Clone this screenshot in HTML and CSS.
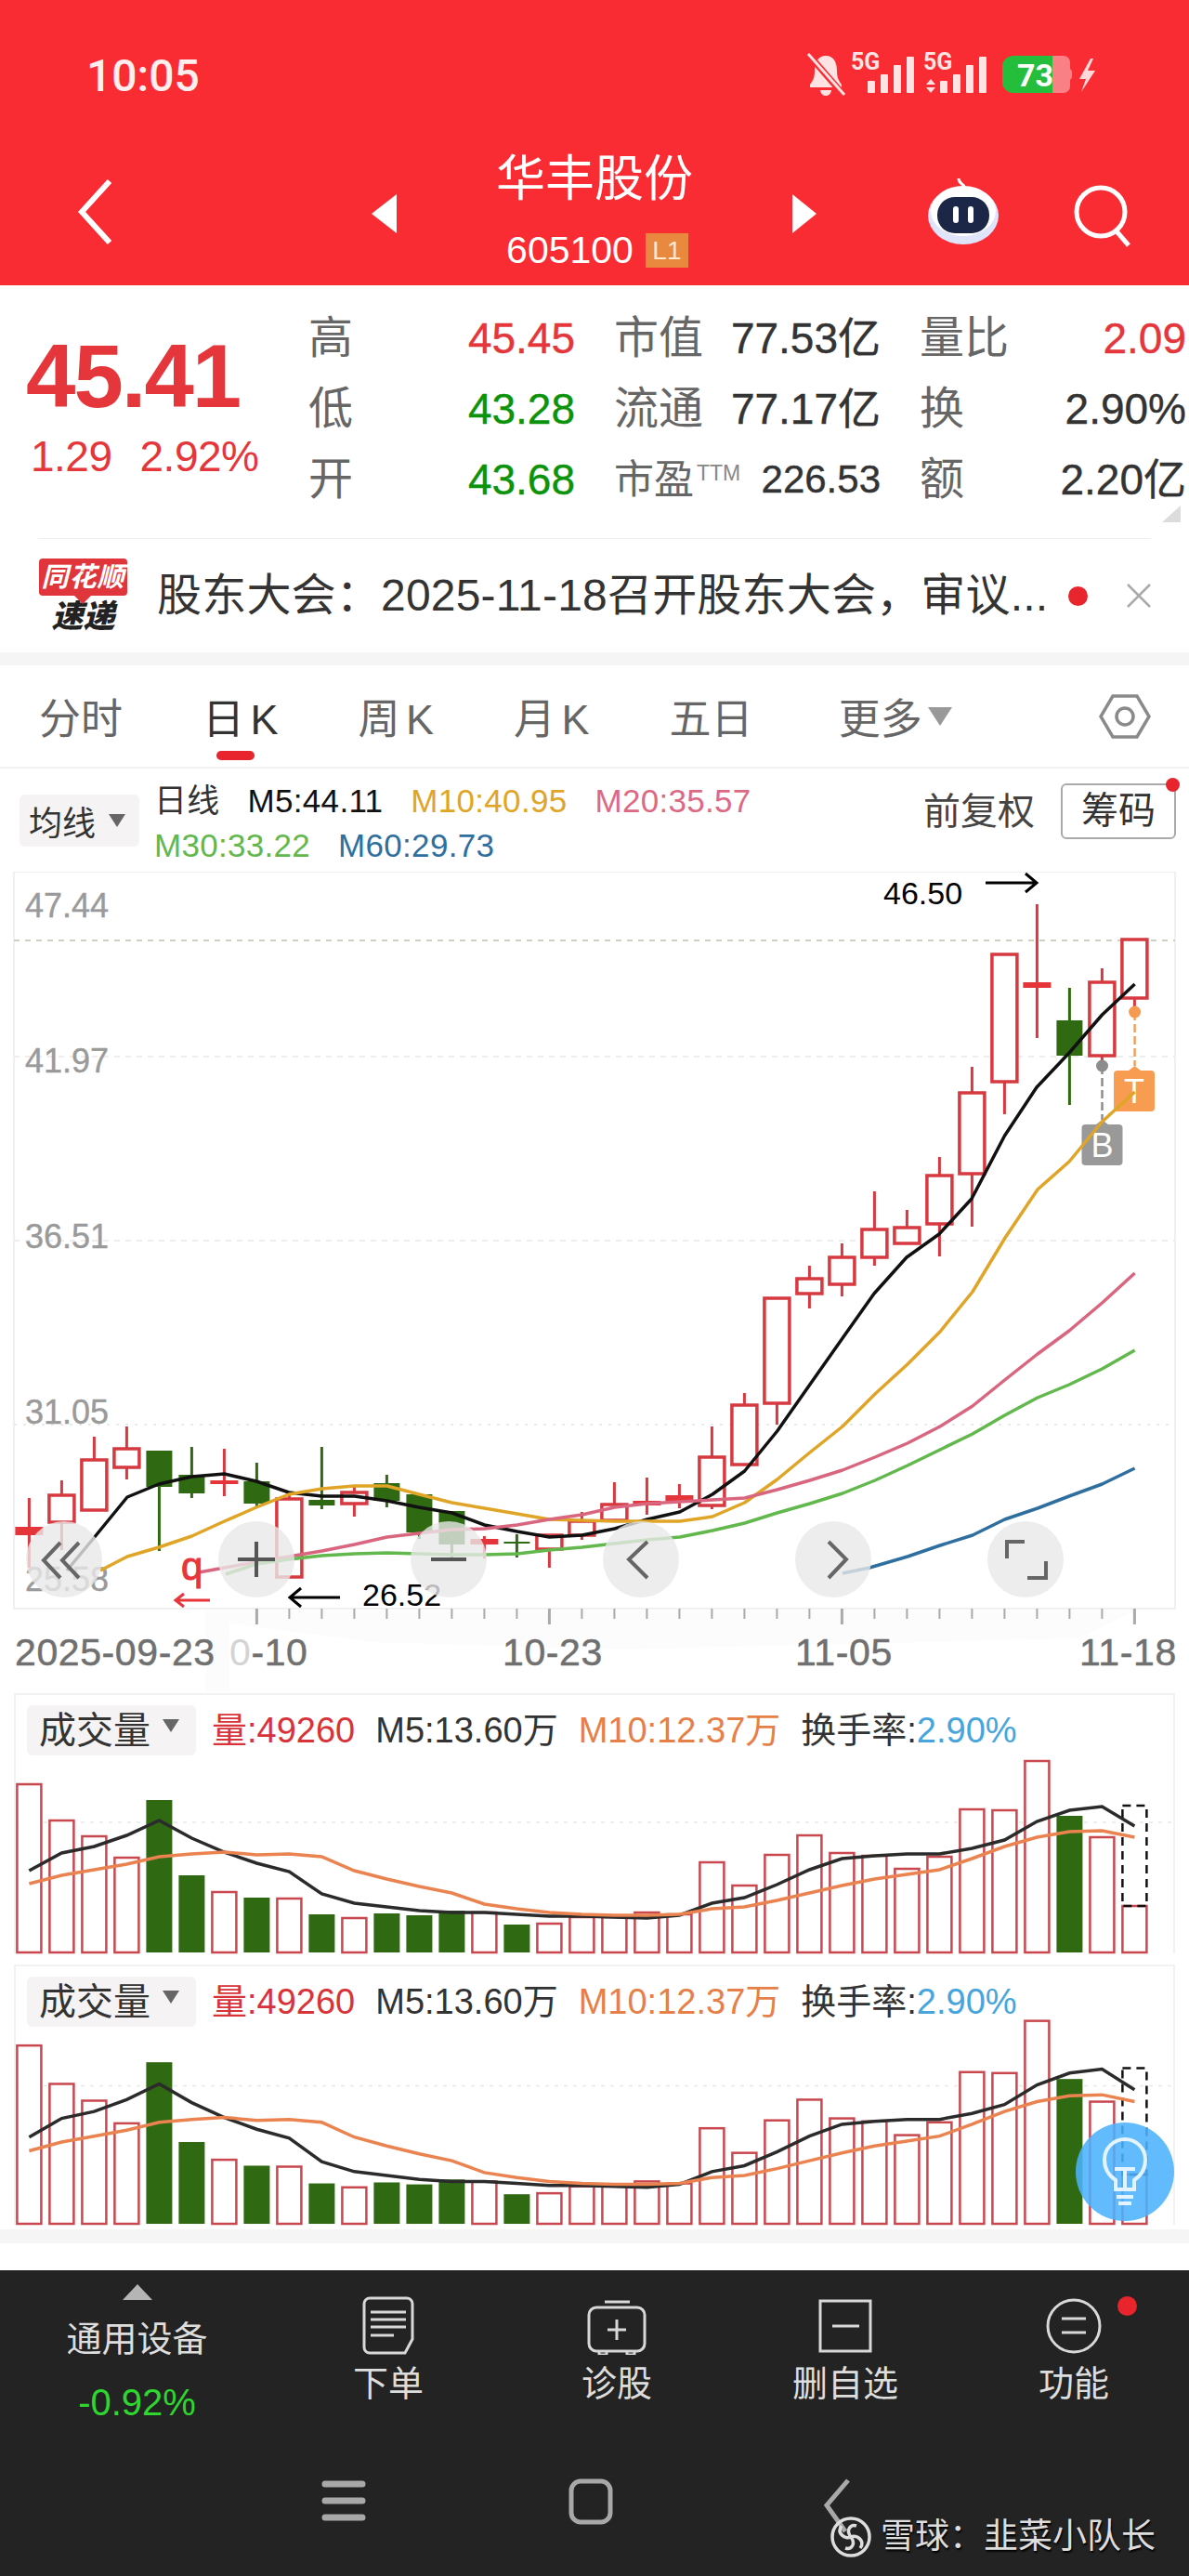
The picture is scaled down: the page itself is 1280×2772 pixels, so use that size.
FILE: index.html
```html
<!DOCTYPE html>
<html lang="zh-CN">
<head>
    <meta charset="UTF-8">
    <title>华丰股份 605100</title>
    <link rel="stylesheet" href="styles.css">
</head>
<body>
<div class="page">

<header class="top">
    <div class="statusbar">
        <span class="clock">10:05</span>
        <svg class="status-icons" width="340" height="60" viewBox="860 50 340 60">
            <!-- bell -->
            <path d="M890 60c-9 0-12 8-12 16 0 8-2 11-5 15v3h34v-3c-3-4-5-7-5-15 0-8-3-16-12-16z" fill="#ffe3e3"/>
            <path d="M884 97h12c-1 8-11 8-12 0z" fill="#ffe3e3"/>
            <path d="M870 57l39 45" stroke="#fa2c33" stroke-width="7"/>
            <path d="M871 58l39 44" stroke="#ffe3e3" stroke-width="3"/>
            <!-- signal 1 -->
            <text x="917" y="75" class="net">5G</text>
            <rect x="935" y="87" width="8" height="13" rx="1"/><rect x="949" y="80" width="8" height="20" rx="1"/>
            <rect x="963" y="70" width="8" height="30" rx="1"/><rect x="977" y="61" width="8" height="39" rx="1"/>
            <!-- signal 2 -->
            <text x="995" y="75" class="net">5G</text>
            <path d="M1003 85l5 6h-10zM1003 100l5-6h-10z"/>
            <rect x="1013" y="87" width="8" height="13" rx="1"/><rect x="1027" y="80" width="8" height="20" rx="1"/>
            <rect x="1041" y="70" width="8" height="30" rx="1"/><rect x="1055" y="61" width="8" height="39" rx="1"/>
            <!-- battery -->
            <path d="M1134 60h12a7 7 0 0 1 7 7v7a6 6 0 0 1 2 6 6 6 0 0 1-2 6v7a7 7 0 0 1-7 7h-12z" fill="#f98084"/>
            <path d="M1092 60h42v40h-42a12 12 0 0 1-12-12V72a12 12 0 0 1 12-12z" fill="#25be3c"/>
            <text x="1096" y="93" class="batt">73</text>
            <!-- bolt -->
            <path d="M1175 63l-12 22h7l-5 14 15-23h-8l6-13z" fill="#ffd9d9"/>
        </svg>
    </div>
    <div class="titlebar">
        <svg class="back" width="37" height="70" viewBox="0 0 37 70"><path d="M34 2L4 35l30 33" fill="none" stroke="#fff" stroke-width="6"/></svg>
        <span class="tri-left"></span>
        <div class="stock">
            <div class="stock-name">华丰股份</div>
            <div class="stock-code">605100<span class="level">L1</span></div>
        </div>
        <span class="tri-right"></span>
        <svg class="robot" width="78" height="72" viewBox="0 0 78 72">
            <path d="M40 10c-1-4-6-3-6-9" fill="none" stroke="#fff" stroke-width="3"/>
            <ellipse cx="39" cy="41" rx="38" ry="31" fill="#dfe4fb"/>
            <ellipse cx="39" cy="36" rx="35" ry="27" fill="#fff"/>
            <rect x="11" y="21" width="56" height="39" rx="19" fill="#1c2747"/>
            <rect x="28" y="31" width="6" height="18" rx="3" fill="#fff"/>
            <rect x="44" y="31" width="6" height="18" rx="3" fill="#fff"/>
        </svg>
        <svg class="search" width="66" height="68" viewBox="0 0 66 68"><circle cx="30" cy="30" r="26" fill="none" stroke="#fff" stroke-width="5"/><path d="M47 51l13 15" stroke="#fff" stroke-width="5"/></svg>
    </div>
</header>

<section class="quote">
    <div class="price-box">
        <div class="price">45.41</div>
        <div class="change"><span>1.29</span><span>2.92%</span></div>
    </div>
    <div class="stats">
        <div class="stat-col">
            <span class="stat-lab">高</span><span class="stat-val up">45.45</span>
            <span class="stat-lab">低</span><span class="stat-val down">43.28</span>
            <span class="stat-lab">开</span><span class="stat-val down">43.68</span>
        </div>
        <div class="stat-col">
            <span class="stat-lab">市值</span><span class="stat-val">77.53亿</span>
            <span class="stat-lab">流通</span><span class="stat-val">77.17亿</span>
            <span class="stat-lab stat-lab-small">市盈<sup class="ttm">TTM</sup></span><span class="stat-val stat-val-small">226.53</span>
        </div>
        <div class="stat-col">
            <span class="stat-lab">量比</span><span class="stat-val up">2.09</span>
            <span class="stat-lab">换</span><span class="stat-val">2.90%</span>
            <span class="stat-lab">额</span><span class="stat-val">2.20亿</span>
        </div>
    </div>
    <span class="fold"></span>
</section>
<div class="divider"></div>
<section class="news">
    <div class="news-logo">
        <div class="news-bubble">同花顺</div>
        <div class="news-sub">速递</div>
    </div>
    <div class="news-text">股东大会：2025-11-18召开股东大会，审议...</div>
    <span class="news-dot"></span>
    <svg class="news-close" width="26" height="26" viewBox="0 0 26 26"><path d="M1 1l24 24M25 1L1 25" stroke="#aaa" stroke-width="2.5"/></svg>
</section>
<div class="band"></div>

<nav class="tabs">
    <span class="tab">分时</span>
    <span class="tab active">日 K</span>
    <span class="tab">周 K</span>
    <span class="tab">月 K</span>
    <span class="tab">五日</span>
    <span class="tab tab-more">更多<i class="tab-arrow"></i></span>
    <svg class="tab-gear" width="56" height="50" viewBox="0 0 56 50"><path d="M15 3h26l13 22-13 22H15L2 25z" fill="none" stroke="#8a8a8a" stroke-width="3.5"/><circle cx="28" cy="25" r="9" fill="none" stroke="#8a8a8a" stroke-width="3.5"/></svg>
</nav>

<div class="legend">
    <div class="pill ma-pill">均线<i class="pill-arrow"></i></div>
    <div class="ma-list">
        <div class="ma-row"><span class="c-dark">日线</span><span class="c-black">M5:44.11</span><span class="c-gold">M10:40.95</span><span class="c-pink">M20:35.57</span></div>
        <div class="ma-row"><span class="c-green">M30:33.22</span><span class="c-blue">M60:29.73</span></div>
    </div>
    <div class="adjust">
        <span class="adjust-text">前复权</span>
        <span class="chips">筹码<i class="chips-dot"></i></span>
    </div>
</div>

<div class="chart">
    <svg class="chart-svg" width="1280" height="882" viewBox="0 938 1280 882">
        <path d="M222 1733h1000l-60 30-500 12-260-8-155-20v73h-25z" fill="#fcfcfc"/>
        <rect x="15" y="938" width="1250" height="793" fill="none" stroke="#f0f0f0" stroke-width="2"/>
        <path d="M15 1012h1250" stroke="#c4c0ad" stroke-width="1.5" stroke-dasharray="6 6"/>
        <path d="M15 1137h1250M15 1335h1250" stroke="#e8e8e8" stroke-width="1.5" stroke-dasharray="6 6"/>
        <path d="M15 1533h1250" stroke="#e4e4e4" stroke-width="1.5" stroke-dasharray="3 7"/>
        <g class="axis-y">
            <text x="27" y="987">47.44</text>
            <text x="27" y="1154">41.97</text>
            <text x="27" y="1343">36.51</text>
            <text x="27" y="1532">31.05</text>
            <text x="27" y="1712">25.58</text>
        </g>
        <g id="ticks" stroke="#aaa"></g>
        <g id="candles"></g>
        <!-- buy / sell marks -->
        <path d="M1186.5 1147v58" stroke="#8d8d8d" stroke-width="2.5" stroke-dasharray="9 4"/>
        <circle cx="1186.5" cy="1147" r="6.5" fill="#8d8d8d"/>
        <path d="M1180 1210l6.5-5 6.5 5z" fill="#999"/>
        <rect x="1164.5" y="1210" width="44" height="44" rx="4" fill="#999"/>
        <text x="1186.5" y="1245" class="mark">B</text>
        <path d="M1221.6 1089v58" stroke="#f0a05c" stroke-width="2.5" stroke-dasharray="9 4"/>
        <circle cx="1221.6" cy="1089" r="6.5" fill="#f59a50"/>
        <path d="M1215 1152l6.5-5 6.5 5z" fill="#f89c52"/>
        <rect x="1199" y="1152" width="44" height="44" rx="4" fill="#f89c52"/>
        <text x="1221" y="1187" class="mark">T</text>
        <g id="ma-lines" fill="none" stroke-width="3.5" stroke-linejoin="round"></g>
        <!-- high / low flags -->
        <text x="951" y="973" class="flag">46.50</text>
        <path d="M1061 950h55M1104 940l12 10-12 10" fill="none" stroke="#000" stroke-width="3"/>
        <text x="390" y="1728" class="flag">26.52</text>
        <path d="M366 1719h-54M324 1709l-12 10 12 10" fill="none" stroke="#000" stroke-width="3"/>
        <text x="195" y="1700" class="flag-q">q</text>
        <path d="M226 1722h-37M198 1715l-9 7 9 7" fill="none" stroke="#e8353b" stroke-width="3"/>
        <g class="axis-x">
            <text x="16" y="1792">2025-09-23</text>
            <text x="247" y="1792"><tspan class="axis-fade">0</tspan>-10</text>
            <text x="541" y="1792">10-23</text>
            <text x="856" y="1792">11-05</text>
            <text x="1162" y="1792">11-18</text>
        </g>
    </svg>
    <div class="chart-btns">
        <span class="round-btn"><svg width="82" height="82" viewBox="0 0 82 82"><path d="M37 23L19 42l18 19M57 23L39 42l18 19" fill="none" stroke="#666" stroke-width="4"/></svg></span>
        <span class="round-btn"><svg width="82" height="82" viewBox="0 0 82 82"><path d="M41 22v38M21 41h40" fill="none" stroke="#555" stroke-width="4"/></svg></span>
        <span class="round-btn"><svg width="82" height="82" viewBox="0 0 82 82"><path d="M22 41h38" fill="none" stroke="#555" stroke-width="4"/></svg></span>
        <span class="round-btn"><svg width="82" height="82" viewBox="0 0 82 82"><path d="M48 22L28 41l20 20" fill="none" stroke="#666" stroke-width="4"/></svg></span>
        <span class="round-btn"><svg width="82" height="82" viewBox="0 0 82 82"><path d="M36 22l19 19-19 20" fill="none" stroke="#666" stroke-width="4"/></svg></span>
        <span class="round-btn"><svg width="82" height="82" viewBox="0 0 82 82"><path d="M40 22H21v18M63 43v18H43" fill="none" stroke="#666" stroke-width="4"/></svg></span>
    </div>
</div>

<section class="vol">
    <div class="vol-head">
        <div class="pill vol-pill">成交量<i class="pill-arrow"></i></div>
        <span class="c-red">量:49260</span><span class="c-dark">M5:13.60万</span><span class="c-orange">M10:12.37万</span><span class="c-dark">换手率:<b class="c-sky">2.90%</b></span>
    </div>
    <svg class="vol-svg" width="1246" height="218" viewBox="0 0 1246 218" data-scale="1"></svg>
</section>
<section class="vol vol-second">
    <div class="vol-head">
        <div class="pill vol-pill">成交量<i class="pill-arrow"></i></div>
        <span class="c-red">量:49260</span><span class="c-dark">M5:13.60万</span><span class="c-orange">M10:12.37万</span><span class="c-dark">换手率:<b class="c-sky">2.90%</b></span>
    </div>
    <svg class="vol-svg" width="1246" height="218" viewBox="0 0 1246 218" data-scale="1.06"></svg>
    <div class="bulb">
        <svg width="106" height="106" viewBox="0 0 106 106" fill="none" stroke="#e4f4ff" stroke-width="4">
            <path d="M43 72V62c-6-4-12-11-12-22a22 22 0 0 1 44 0c0 11-6 18-12 22v10z"/>
            <path d="M42 50h22M53 50v22M44 80h18M46 87h14"/>
        </svg>
    </div>
</section>
<div class="band band-low"></div>
<div class="gap-white"></div>

<footer class="bottom">
    <div class="toolbar">
        <div class="tool-index">
            <i class="index-arrow"></i>
            <div class="index-name">通用设备</div>
            <div class="index-pct">-0.92%</div>
        </div>
        <div class="tool">
            <svg width="64" height="64" viewBox="0 0 64 64" fill="none" stroke="#d8d8d8" stroke-width="3"><path d="M12 3h40a6 6 0 0 1 6 6v38l-8 15H12a6 6 0 0 1-6-6V9a6 6 0 0 1 6-6z"/><path d="M13 18h38M13 26h38M13 34h38M13 43h25"/></svg>
            <span>下单</span>
        </div>
        <div class="tool">
            <svg width="64" height="64" viewBox="0 0 64 64" fill="none" stroke="#d8d8d8" stroke-width="3"><rect x="2" y="13" width="60" height="47" rx="8"/><path d="M19 7h27M32 26v22M22 37h20M13 60v4h8v-4M43 60v4h8v-4"/></svg>
            <span>诊股</span>
        </div>
        <div class="tool">
            <svg width="64" height="64" viewBox="0 0 64 64" fill="none" stroke="#d8d8d8" stroke-width="3"><rect x="5" y="6" width="54" height="54"/><path d="M18 33h29"/></svg>
            <span>删自选</span>
        </div>
        <div class="tool tool-dot">
            <svg width="64" height="64" viewBox="0 0 64 64" fill="none" stroke="#d8d8d8" stroke-width="3"><circle cx="32" cy="33" r="28"/><path d="M19 25h26M19 40h26"/></svg>
            <span>功能</span>
        </div>
    </div>
    <div class="sysnav">
        <svg width="1280" height="132" viewBox="0 2640 1280 132">
            <path d="M350 2673h40M350 2691h40M350 2709h40" stroke="#a8a8a8" stroke-width="7" stroke-linecap="round"/>
            <rect x="615" y="2670" width="42" height="44" rx="10" fill="none" stroke="#a8a8a8" stroke-width="5"/>
            <path d="M913 2669l-23 27 20 28" fill="none" stroke="#a8a8a8" stroke-width="5"/>
        </svg>
        <div class="watermark">
            <svg width="46" height="46" viewBox="0 0 46 46" fill="none" stroke="#ddd" stroke-width="3.5"><circle cx="23" cy="23" r="20"/><path d="M13 11c-6 8 4 15 10 12s16 4 10 12"/><path d="M23 23c-6-8 0-14 6-12M23 23c6 8 0 14-6 12"/></svg>
            <span>雪球：韭菜小队长</span>
        </div>
    </div>
</footer>

</div>
<script src="chart.js"></script>
</body>
</html>
```
FILE: styles.css
```css
*{
    padding: 0;
    margin: 0;
    box-sizing: border-box;
}
body{
    background: #fff;
    font-family: "Liberation Sans", "Noto Sans CJK SC", sans-serif;
    color: #333;
}
i{
    font-style: normal;
}
.page{
    width: 1280px;
    height: 2772px;
    overflow: hidden;
}

/* header */
.top{
    height: 307px;
    background: #fa2c33;
    color: #fff;
}
.statusbar{
    height: 160px;
    display: flex;
    padding: 50px 0 0 93px;
}
.clock{
    font-family: Roboto, sans-serif;
    font-size: 48px;
    font-weight: 500;
    line-height: 64px;
    color: #ffeeee;
}
.status-icons{
    margin-left: 644px;
    fill: #ffe3e3;
}
.status-icons .net{
    font-family: Roboto, sans-serif;
    font-size: 25px;
    font-weight: 700;
}
.status-icons .batt{
    font-family: Roboto, sans-serif;
    font-size: 34px;
    font-weight: 700;
    fill: #fff;
}
.titlebar{
    height: 147px;
    display: grid;
    grid-template-columns: 400px 27px 426px 26px 119px 78px 79px 66px;
    align-items: start;
}
.back{
    margin: 33px 0 0 84px;
}
.tri-left,.tri-right{
    width: 0;
    height: 0;
    margin-top: 49px;
    border-top: 21px solid transparent;
    border-bottom: 21px solid transparent;
}
.tri-left{
    border-right: 27px solid #fff;
}
.tri-right{
    border-left: 26px solid #fff;
}
.stock{
    text-align: center;
}
.stock-name{
    font-size: 53px;
    line-height: 62px;
    margin-top: 2px;
}
.stock-code{
    display: flex;
    justify-content: center;
    align-items: center;
    font-size: 41px;
    line-height: 38px;
    margin-top: 26px;
    padding-left: 6px;
}
.level{
    width: 46px;
    height: 37px;
    margin-left: 13px;
    background: #e9893f;
    color: #ffe9cf;
    font-size: 28px;
    line-height: 37px;
}
.robot{
    grid-column: 6;
    margin-top: 31px;
}
.search{
    grid-column: 8;
    margin-top: 38px;
}

/* quote */
.quote{
    height: 272px;
    display: flex;
    position: relative;
}
.price-box{
    width: 332px;
    padding: 52px 0 0 28px;
}
.price{
    font-size: 96px;
    font-weight: 700;
    line-height: 92px;
    letter-spacing: -2px;
    color: #e5363b;
}
.change{
    display: flex;
    gap: 30px;
    margin-top: 15px;
    padding-left: 5px;
    font-size: 46px;
    line-height: 50px;
    letter-spacing: -0.5px;
    color: #e5363b;
}
.stats{
    display: flex;
    gap: 44px;
    padding-top: 19px;
}
.stat-col{
    width: 285px;
    display: grid;
    grid-template-columns: 100px 1fr;
    grid-auto-rows: 76px;
    align-items: center;
}
.stat-lab{
    font-size: 48px;
    line-height: 60px;
    color: #666;
    white-space: nowrap;
}
.stat-lab-small{
    font-size: 43px;
}
.stat-val{
    margin-right: -2px;
    font-size: 46px;
    line-height: 60px;
    text-align: right;
    white-space: nowrap;
    -webkit-text-stroke: 0.4px currentColor;
}
.stat-val-small{
    font-size: 42px;
}
.up{
    color: #e5363b;
}
.down{
    color: #0c930c;
}
.ttm{
    font-size: 23px;
    line-height: 0;
    color: #888;
    vertical-align: 14px;
    margin-left: 3px;
}
.fold{
    position: absolute;
    right: 9px;
    top: 237px;
    width: 0;
    height: 0;
    border-left: 20px solid transparent;
    border-bottom: 18px solid #dcdcdc;
}
.divider{
    height: 1px;
    margin: 0 41px;
    background: #f0f0f0;
}

/* news */
.news{
    height: 122px;
    display: flex;
    align-items: center;
    padding-left: 42px;
}
.news-logo{
    width: 95px;
    text-align: center;
    margin-top: -2px;
}
.news-bubble{
    position: relative;
    height: 40px;
    border-radius: 4px;
    background: #e0353a;
    color: #fff;
    font-size: 29px;
    font-weight: 700;
    font-style: italic;
    line-height: 40px;
    white-space: nowrap;
    letter-spacing: 1px;
}
.news-bubble::after{
    content: "";
    position: absolute;
    left: 38px;
    top: 40px;
    border-left: 9px solid transparent;
    border-right: 9px solid transparent;
    border-top: 9px solid #e0353a;
}
.news-sub{
    margin-top: 6px;
    font-size: 34px;
    font-weight: 900;
    font-style: italic;
    line-height: 32px;
    color: #222;
}
.news-text{
    margin-left: 32px;
    width: 998px;
    font-size: 48px;
    letter-spacing: 0.2px;
    line-height: 60px;
    white-space: nowrap;
}
.news-dot{
    width: 21px;
    height: 21px;
    margin-left: -17px;
    border-radius: 50%;
    background: #e8252c;
}
.news-close{
    margin-left: 42px;
}
.band{
    height: 14px;
    background: #f5f5f5;
}

/* tabs */
.tabs{
    height: 111px;
    display: flex;
    align-items: center;
    gap: 86px;
    padding: 0 0 0 42px;
    border-bottom: 2px solid #f2f2f2;
    position: relative;
    font-size: 45px;
    color: #666;
}
.tab{
    white-space: nowrap;
    word-spacing: -6px;
    display: flex;
    align-items: center;
}
.tab-more{
    margin-left: 6px;
}
.tab.active{
    color: #333;
    position: relative;
}
.tab.active::after{
    content: "";
    position: absolute;
    left: 15px;
    top: 70px;
    width: 41px;
    height: 10px;
    border-radius: 5px;
    background: #e8252c;
}
.tab-arrow{
    margin-left: 6px;
    border-left: 13px solid transparent;
    border-right: 13px solid transparent;
    border-top: 20px solid #999;
}
.tab-gear{
    position: absolute;
    right: 41px;
    top: 30px;
}

/* legend */
.legend{
    height: 111px;
    display: flex;
    padding-left: 21px;
}
.pill{
    display: flex;
    align-items: center;
    border-radius: 6px;
    background: #f5f3f3;
    color: #333;
}
.pill-arrow{
    border-left: 9px solid transparent;
    border-right: 9px solid transparent;
    border-top: 14px solid #666;
}
.ma-pill{
    width: 129px;
    height: 56px;
    margin-top: 28px;
    padding-left: 10px;
    font-size: 36px;
}
.ma-pill .pill-arrow{
    margin-left: 14px;
}
.ma-list{
    margin-left: 16px;
    padding-top: 11px;
}
.ma-row{
    display: flex;
    gap: 30px;
    font-size: 35px;
    letter-spacing: 0.3px;
    line-height: 48px;
    white-space: nowrap;
}
.c-dark{ color: #333; }
.c-black{ color: #111; }
.c-gold{ color: #e0a526; }
.c-pink{ color: #dc6a84; }
.c-green{ color: #62b84c; }
.c-blue{ color: #2f6f9f; }
.c-red{ color: #d9333a; }
.c-orange{ color: #e77f49; }
.c-sky{ color: #45a5dc; font-weight: 400; }
.adjust{
    margin-left: auto;
    margin-right: 14px;
    padding-top: 16px;
    display: flex;
    align-items: flex-start;
    gap: 28px;
    font-size: 40px;
    line-height: 60px;
    color: #444;
}
.chips{
    position: relative;
    width: 124px;
    height: 60px;
    border: 2px solid #aaa;
    border-radius: 6px;
    text-align: center;
    line-height: 54px;
    color: #333;
}
.chips-dot{
    position: absolute;
    right: -6px;
    top: -8px;
    width: 15px;
    height: 15px;
    border-radius: 50%;
    background: #e8252c;
}

/* k line */
.chart{
    position: relative;
    height: 884px;
}
.chart-svg{
    display: block;
}
.axis-y text{
    font-size: 36px;
    fill: #9a9a9a;
    stroke: #9a9a9a;
    stroke-width: 0.4px;
}
.axis-x text{
    font-size: 41px;
    letter-spacing: 0.6px;
    fill: #707070;
    stroke: #707070;
    stroke-width: 0.5px;
}
.axis-x .axis-fade{
    fill: #d4d4d4;
    stroke: none;
}
.mark{
    font-size: 36px;
    fill: #fff;
    text-anchor: middle;
}
.flag{
    font-size: 34px;
    fill: #000;
}
.flag-q{
    font-size: 42px;
    fill: #e8353b;
    stroke: #e8353b;
    stroke-width: 1px;
}
.chart-btns{
    position: absolute;
    left: 28px;
    top: 699px;
    display: flex;
    gap: 125px;
}
.round-btn{
    width: 82px;
    height: 82px;
    border-radius: 50%;
    background: rgba(232, 232, 232, 0.8);
}

/* volume */
.vol{
    position: relative;
    width: 1250px;
    height: 280px;
    margin-left: 15px;
    border: 2px solid #f2f2f2;
    border-bottom-width: 0;
}
.vol-second{
    margin-top: 12px;
}
.vol-head{
    height: 60px;
    display: flex;
    align-items: flex-start;
    gap: 22px;
    padding: 11px 0 0 12px;
    font-size: 38px;
    line-height: 54px;
    white-space: nowrap;
}
.vol-pill{
    width: 182px;
    height: 54px;
    margin-right: -5px;
    padding-left: 13px;
    font-size: 40px;
}
.vol-pill .pill-arrow{
    margin: 0 0 10px 13px;
}
.vol-svg{
    display: block;
    overflow: visible;
}
.bulb{
    position: absolute;
    left: 1141px;
    top: 168px;
    width: 106px;
    height: 106px;
    border-radius: 50%;
    background: rgba(75, 178, 252, 0.88);
}
.band-low{
    height: 15px;
    margin-top: 5px;
}
.gap-white{
    height: 29px;
}

/* bottom */
.bottom{
    position: relative;
    height: 329px;
    background: #232323;
    color: #ddd;
}
.toolbar{
    height: 197px;
    display: flex;
}
.tool-index{
    width: 295px;
    padding-top: 15px;
    text-align: center;
    font-size: 38px;
    line-height: 44px;
}
.index-arrow{
    display: block;
    width: 0;
    margin: 0 auto;
    border-left: 16px solid transparent;
    border-right: 16px solid transparent;
    border-bottom: 17px solid #b5b5b5;
}
.index-name{
    margin-top: 20px;
}
.index-pct{
    margin-top: 24px;
    font-size: 40px;
    color: #2fd62f;
}
.tool{
    position: relative;
    width: 246px;
    padding-top: 27px;
    display: flex;
    flex-direction: column;
    align-items: center;
    gap: 9px;
    font-size: 38px;
    line-height: 44px;
}
.tool-dot::after{
    content: "";
    position: absolute;
    left: 170px;
    top: 28px;
    width: 21px;
    height: 21px;
    border-radius: 50%;
    background: #e8252c;
}
.sysnav svg{
    display: block;
}
.watermark{
    position: absolute;
    left: 893px;
    top: 264px;
    display: flex;
    align-items: center;
    gap: 9px;
    font-size: 37px;
    line-height: 46px;
    white-space: nowrap;
    text-shadow: 1px 2px 2px #000;
}
```
FILE: chart.js
```js
// 35 trading days, x step is the same for candles and volume bars
var X0 = 31.4;
var STEP = 35;
var NS = 'http://www.w3.org/2000/svg';

// high, body top, body bottom, low, type (r hollow red, f solid red, g green)
var candles = [
    [1612,1643,1652,1687,'f'],[1593,1609,1638,1668,'r'],[1546,1571,1625,1625,'r'],[1535,1559,1579,1592,'r'],
    [1561,1561,1600,1669,'g'],[1557,1587,1607,1612,'g'],[1559,1593,1597,1610,'f'],[1574,1594,1618,1623,'g'],
    [1607,1613,1697,1697,'r'],[1557,1614,1620,1624,'g'],[1600,1606,1618,1632,'r'],[1587,1596,1615,1622,'g'],
    [1608,1608,1649,1656,'g'],[1626,1626,1662,1677,'g'],[1653,1656,1662,1677,'f'],[1651,1659,1661,1676,'g'],
    [1652,1652,1667,1687,'r'],[1627,1637,1652,1657,'r'],[1595,1619,1636,1636,'r'],[1590,1615,1620,1630,'f'],
    [1597,1609,1615,1623,'f'],[1535,1568,1620,1624,'r'],[1499,1512,1576,1576,'r'],[1397,1397,1510,1533,'r'],
    [1362,1376,1392,1408,'r'],[1338,1353,1382,1395,'r'],[1282,1323,1353,1362,'r'],[1302,1321,1338,1338,'r'],
    [1245,1265,1317,1352,'r'],[1148,1176,1263,1320,'r'],[1027,1027,1164,1199,'r'],[973,1057,1063,1117,'f'],
    [1063,1098,1136,1189,'g'],[1042,1057,1136,1147,'r'],[1011,1011,1074,1085,'r']
];

var maLines = [
    ['#111', [[72,1690],[101,1655],[137,1611],[171,1597],[206.5,1589],[241.6,1586],[276,1594],[311,1606],[346.5,1610],[381.6,1610],[416.7,1615],[451,1622],[486.5,1628],[521.6,1641],[556.7,1648],[591.4,1654],[626.5,1652],[661.6,1645],[696.7,1635],[731.8,1627],[767,1608],[801.6,1583],[836.7,1540],[871.8,1490],[907,1440],[941,1392],[976,1353],[1011,1328],[1046,1290],[1081.6,1222],[1116,1170],[1151,1133],[1186.5,1092],[1221.6,1059]]],
    ['#e0a526', [[108,1690],[137,1675],[171,1665],[206.5,1653],[241.6,1637],[276,1622],[311,1608],[346.5,1602],[381.6,1599],[416.7,1599],[451,1608],[486.5,1617],[521.6,1623],[556.7,1629],[591.4,1635],[626.5,1636],[661.6,1637],[696.7,1637],[731.8,1637],[767,1632],[801.6,1617],[836.7,1592],[871.8,1563],[907,1535],[942,1500],[977,1468],[1012,1433],[1047,1390],[1082,1332],[1117,1280],[1151,1250],[1186.5,1207],[1221.6,1175]]],
    ['#d9657f', [[214,1692],[241.6,1687],[276,1681],[311,1675],[346.5,1669],[381.6,1662],[416.7,1654],[451,1650],[486.5,1646],[521.6,1645],[556.7,1641],[591.4,1635],[626.5,1630],[661.6,1622],[696.7,1618],[731.8,1616],[767,1614],[801.6,1612],[836.7,1603],[871.8,1593],[907,1582],[942,1568],[977,1553],[1012,1535],[1047,1513],[1081.6,1485],[1117,1457],[1151,1432],[1186.5,1402],[1221.6,1370]]],
    ['#62b84c', [[243,1694],[276,1683],[311,1678],[346.5,1674],[381.6,1672],[416.7,1671],[451,1672],[486.5,1673],[521.6,1673],[556.7,1672],[591.4,1668],[626.5,1665],[661.6,1661],[696.7,1657],[731.8,1654],[767,1647],[801.6,1639],[836.7,1628],[871.8,1618],[907,1607],[942,1593],[977,1577],[1012,1560],[1047,1543],[1081.6,1523],[1117,1504],[1151,1490],[1186.5,1473],[1221.6,1453]]],
    ['#2f6f9f', [[907,1693],[936,1687],[977,1675],[1012,1663],[1047,1652],[1081.6,1635],[1117,1623],[1151,1610],[1186.5,1597],[1221.6,1580]]]
];

// volume: page y in the first panel, base line 2101
var volTop = [1920,1959,1976,1999,1937,2018,2036,2042,2043,2060,2064,2059,2061,2056,2058,2071,2070,2063,2063,2058,2060,2004,2029,1996,1975,1994,1997,2011,1998,1947,1948,1895,1954,1977,2051];
var volGreen = [4,5,7,9,11,12,13,15,32];
var volM5 = [2013,1994,1987,1975,1959,1978,1993,2005,2014,2038,2048,2052,2056,2058,2058,2060,2062,2062,2063,2064,2061,2048,2042,2028,2012,2000,1997,1995,1995,1989,1980,1960,1948,1944,1965];
var volM10 = [2027,2018,2012,2006,1998,1995,1993,1996,1995,1998,2013,2022,2030,2037,2049,2054,2058,2060,2061,2061,2060,2054,2052,2045,2037,2029,2022,2017,2012,2000,1987,1977,1971,1970,1977];

function add(parent, tag, attrs) {
    var el = document.createElementNS(NS, tag);
    for (var k in attrs) {
        el.setAttribute(k, attrs[k]);
    }
    parent.appendChild(el);
    return el;
}

function drawCandles() {
    var g = document.getElementById('candles');
    for (var i = 0; i < candles.length; i++) {
        var c = candles[i];
        var x = X0 + i * STEP;
        var col = c[4] == 'g' ? '#2f6a12' : '#d6393f';
        if (c[0] < c[1]) add(g, 'path', {d: 'M' + x + ' ' + c[0] + 'V' + c[1], stroke: col, 'stroke-width': 3});
        if (c[3] > c[2]) add(g, 'path', {d: 'M' + x + ' ' + c[2] + 'V' + c[3], stroke: col, 'stroke-width': 3});
        if (c[4] == 'r') {
            add(g, 'rect', {x: x - 13.5, y: c[1], width: 27, height: c[2] - c[1], fill: '#fff', stroke: col, 'stroke-width': 3.5});
        } else if (c[4] == 'f') {
            add(g, 'rect', {x: x - 15, y: c[1], width: 30, height: c[2] - c[1], fill: '#e5343a'});
        } else {
            add(g, 'rect', {x: x - 14, y: c[1], width: 28, height: c[2] - c[1], fill: col});
        }
    }
}

function drawTicks() {
    var g = document.getElementById('ticks');
    for (var i = 7; i < candles.length; i++) {
        var x = X0 + i * STEP;
        var major = (i - 7) % 9 == 0;
        add(g, 'path', {d: 'M' + x + ' 1731V' + (major ? 1748 : 1742), 'stroke-width': major ? 3 : 2});
    }
}

function drawMa() {
    var g = document.getElementById('ma-lines');
    for (var i = 0; i < maLines.length; i++) {
        add(g, 'polyline', {points: maLines[i][1].join(' '), stroke: maLines[i][0]});
    }
}

function volPoints(list, scale) {
    var pts = [];
    for (var i = 0; i < list.length; i++) {
        pts.push((X0 + i * STEP - 17) + ',' + (217 - (2101 - list[i]) * scale));
    }
    return pts.join(' ');
}

function drawVolume(svg) {
    var scale = parseFloat(svg.getAttribute('data-scale'));
    add(svg, 'path', {d: 'M0 ' + (217 - 140 * scale) + 'H1246', stroke: '#e8e8e8', 'stroke-width': 1.5, 'stroke-dasharray': '4 6'});
    for (var i = 0; i < volTop.length; i++) {
        var x = X0 + i * STEP - 17;
        var h = (2101 - volTop[i]) * scale;
        if (volGreen.indexOf(i) >= 0) {
            add(svg, 'rect', {x: x - 14, y: 217 - h, width: 28, height: h, fill: '#2f6a12'});
        } else {
            add(svg, 'rect', {x: x - 13, y: 217 - h, width: 26, height: h, fill: '#fff', stroke: '#c9474f', 'stroke-width': 2.5});
        }
    }
    // today's estimate, dashed on top of the last bar
    var last = X0 + 34 * STEP - 17;
    add(svg, 'rect', {x: last - 13, y: 217 - 158 * scale, width: 26, height: 108 * scale, fill: 'none', stroke: '#111', 'stroke-width': 2.5, 'stroke-dasharray': '9 6'});
    add(svg, 'polyline', {points: volPoints(volM5, scale), fill: 'none', stroke: '#2b2b2b', 'stroke-width': 3.5});
    add(svg, 'polyline', {points: volPoints(volM10, scale), fill: 'none', stroke: '#ea8350', 'stroke-width': 3.5});
}

drawTicks();
drawCandles();
drawMa();
var volSvgs = document.querySelectorAll('.vol-svg');
for (var n = 0; n < volSvgs.length; n++) {
    drawVolume(volSvgs[n]);
}
```
